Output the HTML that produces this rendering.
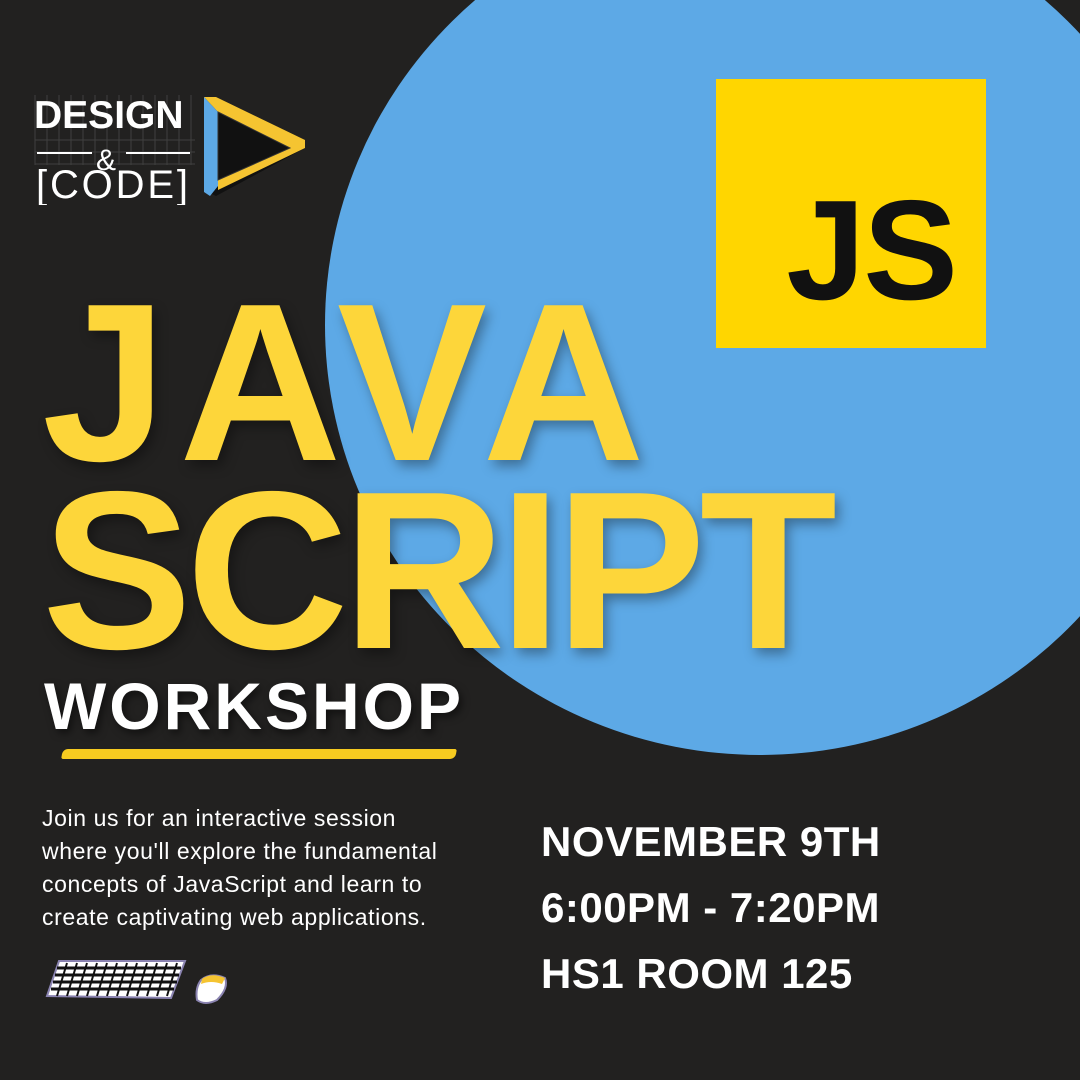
<!DOCTYPE html>
<html><head><style>
body{margin:0;width:1080px;height:1080px;background:#222120;overflow:hidden;position:relative;font-family:"Liberation Sans",sans-serif}
.circle{position:absolute;left:325px;top:-105px;width:870px;height:860px;border-radius:50%;background:#5DA9E6}
.js{position:absolute;left:716px;top:79px;width:270px;height:269px;background:#FFD600}
.js span{position:absolute;right:30px;bottom:26px;font-weight:bold;font-size:142px;color:#111;letter-spacing:-2px;line-height:1}
.big{position:absolute;left:42px;font-weight:bold;color:#FDD63A;font-size:225px;line-height:1;text-shadow:4px 6px 12px rgba(0,0,0,.35)}
.ws{position:absolute;left:44px;top:673px;font-weight:bold;color:#fff;font-size:66px;letter-spacing:3px;line-height:1;text-shadow:3px 4px 8px rgba(0,0,0,.5)}
.ul{position:absolute;left:62px;top:749px;width:394px;height:10px;background:#F7CB20;border-radius:5px 2px 5px 2px;transform:skewX(-10deg)}
.p{position:absolute;left:42px;top:802px;color:#fff;font-size:23px;letter-spacing:.6px;line-height:33px}
.r{position:absolute;left:541px;color:#fff;font-weight:bold;font-size:42px;line-height:1;letter-spacing:.5px}
</style></head><body>
<div class="circle"></div>
<div class="js"><span>JS</span></div>
<svg style="position:absolute;left:30px;top:90px" width="290" height="115">
<g stroke="#555" stroke-width="1" opacity=".6">
<path d="M5 5V75M17 5V75M29 5V75M41 5V75M53 5V75M65 5V75M77 5V75M89 5V75M101 5V75M113 5V75M125 5V75M137 5V75M149 5V75M161 5V75M5 50H165M5 62H165M5 74H165"/></g>
<text x="4" y="38" fill="#fff" font-weight="bold" font-size="39" font-family="Liberation Sans">DESIGN</text>
<path d="M7 63H62M96 63H160" stroke="#fff" stroke-width="2"/>
<text x="66" y="80" fill="#fff" font-size="30" font-family="Liberation Sans">&amp;</text>
<text x="6" y="108" fill="#fff" font-size="40" textLength="152" font-family="Liberation Sans">[CODE]</text>
<polygon points="174,7 275,58 186,106 174,100" fill="#111"/>
<polygon points="174,7 186,7 275,50 275,58 260,58 188,22" fill="#F5C431"/>
<polygon points="174,7 188,22 188,96 180,106 174,102" fill="#5DA9E6"/>
<polygon points="188,90 260,58 275,58 188,100" fill="#F5C431"/>
<polygon points="188,22 260,58 188,90" fill="#111" stroke="#333" stroke-width="1"/>
</svg>
<div class="big" style="top:270px;letter-spacing:12px">JAVA</div>
<div class="big" style="top:458px;letter-spacing:-6px">SCRIPT</div>
<div class="ws">WORKSHOP</div>
<div class="ul"></div>
<div class="p">Join us for an interactive session<br>where you'll explore the fundamental<br>concepts of JavaScript and learn to<br>create captivating web applications.</div>
<div class="r" style="top:821px">NOVEMBER 9TH</div>
<div class="r" style="top:887px">6:00PM - 7:20PM</div>
<div class="r" style="top:953px">HS1 ROOM 125</div>
<svg style="position:absolute;left:45px;top:958px" width="190" height="50">
<polygon points="14,3 140,3 126,40 2,38" fill="#fff" stroke="#8a83b0" stroke-width="2"/>
<g stroke="#111" stroke-width="3">
<path d="M12 10H136M10 17H134M8 24H132M6 31H129"/>
<path d="M22 5L12 38M32 5L22 38M42 5L32 38M52 5L42 38M62 5L52 38M72 5L62 38M82 5L72 38M92 5L82 38M102 5L92 38M112 5L102 38M122 5L112 38M132 5L122 38" stroke-width="2"/>
</g>
<path d="M156 22 Q166 14 180 20 Q184 30 172 42 Q160 48 152 42 Q150 30 156 22Z" fill="#fff" stroke="#8a83b0" stroke-width="2"/>
<path d="M157 21 Q166 14 180 20 L177 26 Q166 22 156 26Z" fill="#F5C431"/>
</svg>
</body></html>
